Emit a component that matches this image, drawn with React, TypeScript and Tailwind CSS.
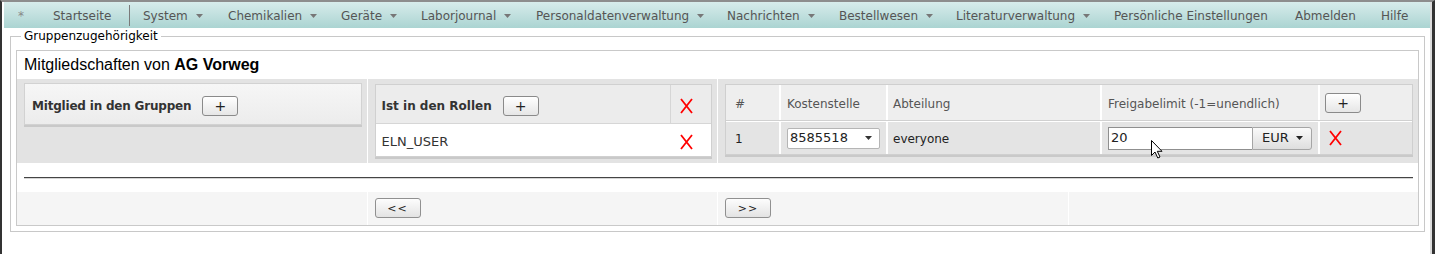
import React from 'react';

const navItems = [
  { label: 'System', w: 85, dd: true },
  { label: 'Chemikalien', w: 113, dd: true },
  { label: 'Geräte', w: 80, dd: true },
  { label: 'Laborjournal', w: 115, dd: true },
  { label: 'Personaldatenverwaltung', w: 191, dd: true },
  { label: 'Nachrichten', w: 112, dd: true },
  { label: 'Bestellwesen', w: 117, dd: true },
  { label: 'Literaturverwaltung', w: 158, dd: true },
  { label: 'Persönliche Einstellungen', w: 181, dd: false },
  { label: 'Abmelden', w: 86, dd: false },
  { label: 'Hilfe', w: 40, dd: false },
];

const Caret = ({ color = '#777' }: { color?: string }) => (
  <svg width="7" height="4" viewBox="0 0 7 4" className="shrink-0">
    <polygon points="0,0 7,0 3.5,4" fill={color} />
  </svg>
);

const RedX = () => (
  <svg width="13" height="16" viewBox="0 0 13 16">
    <path d="M1 1 L12 15 M12 1 L1 15" stroke="#ff0000" strokeWidth="1.8" fill="none" />
  </svg>
);

const PlusButton = () => (
  <span className="w-[36px] h-[20px] border border-[#8a8a8a] rounded-[3px] bg-linear-to-b from-white to-[#e6e6e6] flex items-center justify-center text-[14px] text-[#222] leading-none">
    +
  </span>
);

const PagerButton = ({ label }: { label: string }) => (
  <span className="w-[46px] h-[20px] border border-[#909090] rounded-[3px] bg-linear-to-b from-[#fdfdfd] to-[#e3e3e3] flex items-center justify-center text-[11px] tracking-[1px] text-[#222] leading-none">
    {label}
  </span>
);

const Cursor = () => (
  <svg width="13" height="19" viewBox="0 0 13 19" className="absolute left-[43px] top-[13px]">
    <path d="M0.5 0.5 L0.5 15.5 L4 12 L6.8 18 L9 17 L6.3 11.3 L11 11.3 Z" fill="#fff" stroke="#000" strokeWidth="1" strokeLinejoin="round" />
  </svg>
);

export default function App() {
  return (
    <div className="w-[1435px] h-[254px] overflow-hidden bg-white border-l-2 border-l-[#333] border-r-[3px] border-r-[#333] border-t-2 border-t-[#8d8d8d] font-['DejaVu_Sans',sans-serif] text-[12px] text-[#333]">
      <div className="h-full pl-[2px] border-r-2 border-r-[#dcdcdc]">
        {/* top menu */}
        <nav className="h-[26px] pt-[2px] flex items-center bg-linear-to-b from-[#d7eceb] to-[#abd4d2] text-[#555] whitespace-nowrap">
          <span className="ml-[14px] w-[35px] text-[#888]">*</span>
          <span className="w-[76px]">Startseite</span>
          <span className="w-px h-[21px] -mt-[2px] bg-[#7a7a7a]" />
          <div className="ml-[13px] flex items-center">
            {navItems.map((item) => (
              <span key={item.label} className="flex items-center gap-[8px]" style={{ width: item.w }}>
                {item.label}
                {item.dd && <Caret />}
              </span>
            ))}
          </div>
        </nav>

        <fieldset className="mt-[1px] ml-[6px] mr-[5px] border border-[#c8c8c8] px-[5px] pb-[5px] pt-[7px]">
          <legend className="ml-[5px] px-[3px] leading-[14px] text-black">Gruppenzugehörigkeit</legend>
          <div className="border border-[#c9c9c9]">
            <div className="h-[28px] pt-[5px] pl-[7px] leading-[18px] text-[16px] font-['Liberation_Sans',sans-serif] text-black">
              Mitgliedschaften von <b>AG Vorweg</b>
            </div>

            {/* memberships */}
            <div className="grid grid-cols-4 gap-px bg-white h-[84px]">
              <div className="bg-[#e3e3e3] pl-[7px] pr-[5px] pt-[4px]">
                <div className="h-[42px] pt-[3px] border border-[#d2d2d2] bg-linear-to-b from-[#f6f6f6] to-[#ececec] shadow-[0_2px_0_#c9c9c9] flex items-center pl-[7px] gap-[11px]">
                  <span className="font-bold tracking-[-0.2px]">Mitglied in den Gruppen</span>
                  <PlusButton />
                </div>
              </div>

              <div className="bg-[#e3e3e3] pl-[7px] pr-[5px] pt-[5px]">
                <div className="border border-[#d0d0d0] shadow-[0_2px_0_#c9c9c9] bg-white">
                  <div className="h-[39px] pt-[4px] flex bg-[#ececec] border-b border-[#d6d6d6]">
                    <div className="flex-1 flex items-center pl-[6px] gap-[11px]">
                      <span className="font-bold">Ist in den Rollen</span>
                      <PlusButton />
                    </div>
                    <div className="w-[41px] -mt-[4px] border-l border-[#d6d6d6] flex items-center pl-[9px] pt-[4px]">
                      <RedX />
                    </div>
                  </div>
                  <div className="h-[32px] pt-[3px] flex items-center">
                    <span className="flex-1 pl-[6px] text-[13px]">ELN_USER</span>
                    <span className="w-[41px] pl-[10px] flex items-center">
                      <RedX />
                    </span>
                  </div>
                </div>
              </div>

              <div className="col-span-2 bg-[#e3e3e3] pl-[7px] pr-[5px] pt-[5px]">
                <div className="border border-[#cfcfcf] shadow-[0_2px_0_#c9c9c9]">
                  <div className="grid grid-cols-[53px_107px_214px_218px_1fr] h-[36px] bg-[#eeeeee] border-b border-[#d0d0d0] text-[#555]">
                    <div className="flex items-center pl-[9px] pt-[2px]">#</div>
                    <div className="flex items-center pl-[6px] pt-[2px] border-l-2 border-white">Kostenstelle</div>
                    <div className="flex items-center pl-[5px] pt-[2px] border-l-2 border-white">Abteilung</div>
                    <div className="flex items-center pl-[6px] pt-[2px] border-l-2 border-white">Freigabelimit (-1=unendlich)</div>
                    <div className="flex items-center pl-[5px] border-l-2 border-white">
                      <PlusButton />
                    </div>
                  </div>
                  <div className="grid grid-cols-[53px_107px_214px_218px_1fr] h-[33px] bg-[#e4e4e4] border-t border-white text-[#222]">
                    <div className="flex items-center pl-[9px] pt-[2px]">1</div>
                    <div className="flex items-center pl-[6px] border-l-2 border-white">
                      <div className="w-[93px] h-[21px] bg-white border border-[#b5b5b5] rounded-[2px] flex items-center justify-between pl-[2px] pr-[7px] text-[13px]">
                        8585518
                        <Caret color="#333" />
                      </div>
                    </div>
                    <div className="flex items-center pl-[5px] pt-[2px] border-l-2 border-white">everyone</div>
                    <div className="flex items-center pl-[6px] border-l-2 border-white">
                      <div className="relative flex h-[23px]">
                        <div className="w-[144px] border border-[#8f8f8f] border-r-0 bg-white pl-[2px] flex items-center text-[13px]">20</div>
                        <div className="w-[60px] border border-[#a5a5a5] rounded-r-[3px] bg-linear-to-b from-[#fafafa] to-[#dedede] flex items-center pl-[9px] gap-[7px] text-[13px]">
                          EUR
                          <Caret color="#222" />
                        </div>
                        <Cursor />
                      </div>
                    </div>
                    <div className="flex items-center pl-[9px] border-l-2 border-white">
                      <RedX />
                    </div>
                  </div>
                </div>
              </div>
            </div>

            <div className="h-[29px] flex items-center pl-[7px] pr-[5px]">
              <div className="w-full border-t border-t-[#444] border-b border-b-[#d5d5d5]" />
            </div>

            {/* pager */}
            <div className="grid grid-cols-4 gap-px bg-white h-[33px]">
              <div className="bg-[#f5f5f5]" />
              <div className="bg-[#f5f5f5] pt-[6px] pl-[7px]">
                <PagerButton label="<<" />
              </div>
              <div className="bg-[#f5f5f5] pt-[6px] pl-[7px]">
                <PagerButton label=">>" />
              </div>
              <div className="bg-[#f5f5f5]" />
            </div>
          </div>
        </fieldset>
      </div>
    </div>
  );
}
